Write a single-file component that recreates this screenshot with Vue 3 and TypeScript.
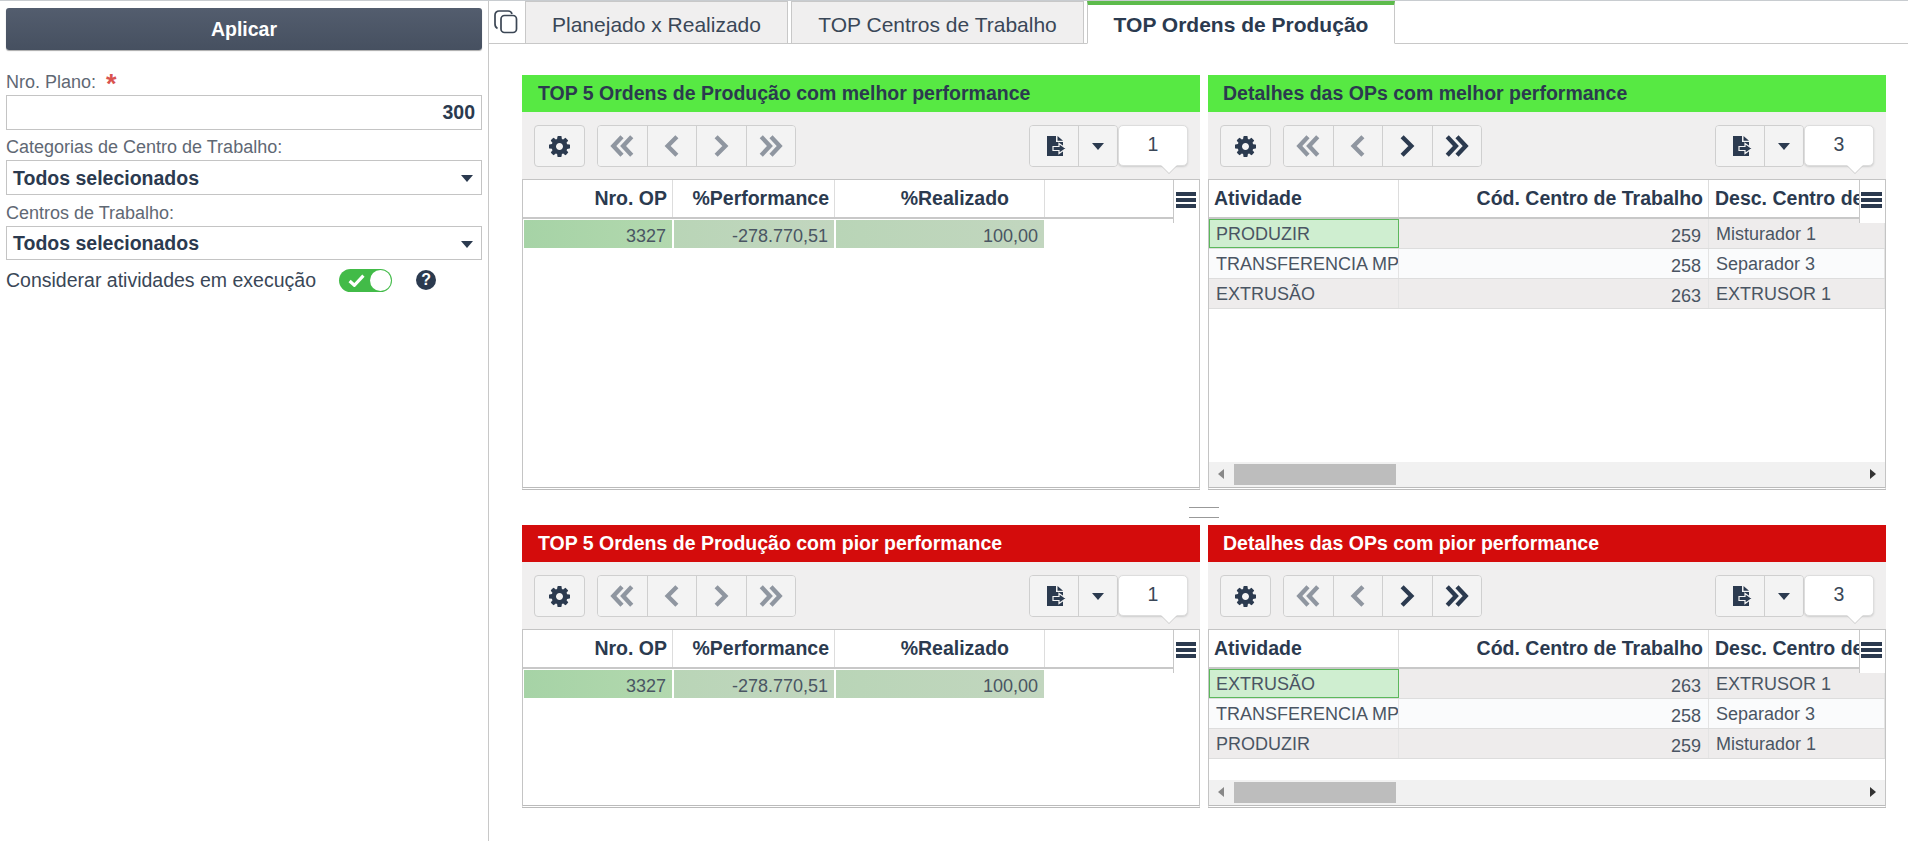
<script setup lang="ts">
interface Col { label: string; align: 'left' | 'right'; width: number; pr?: number; }
interface Panel {
  title: string; tone: 'good' | 'bad'; height: number; count: string; nextActive: boolean;
  wide: boolean; cols: Col[]; rows: string[][];
}
const opCols: Col[] = [
  { label: 'Nro. OP', align: 'right', width: 150 },
  { label: '%Performance', align: 'right', width: 162 },
  { label: '%Realizado', align: 'right', width: 210, pr: 35 },
];
const detailCols: Col[] = [
  { label: 'Atividade', align: 'left', width: 190 },
  { label: 'Cód. Centro de Trabalho', align: 'right', width: 310 },
  { label: 'Desc. Centro de Trabalho', align: 'left', width: 176 },
];
const opRow = [['3327', '-278.770,51', '100,00']];
const panels: Panel[] = [
  { title: 'TOP 5 Ordens de Produção com melhor performance', tone: 'good', height: 415, count: '1', nextActive: false, wide: false, cols: opCols, rows: opRow },
  { title: 'Detalhes das OPs com melhor performance', tone: 'good', height: 415, count: '3', nextActive: true, wide: true, cols: detailCols,
    rows: [['PRODUZIR', '259', 'Misturador 1'], ['TRANSFERENCIA MP', '258', 'Separador 3'], ['EXTRUSÃO', '263', 'EXTRUSOR 1']] },
  { title: 'TOP 5 Ordens de Produção com pior performance', tone: 'bad', height: 283, count: '1', nextActive: false, wide: false, cols: opCols, rows: opRow },
  { title: 'Detalhes das OPs com pior performance', tone: 'bad', height: 283, count: '3', nextActive: true, wide: true, cols: detailCols,
    rows: [['EXTRUSÃO', '263', 'EXTRUSOR 1'], ['TRANSFERENCIA MP', '258', 'Separador 3'], ['PRODUZIR', '259', 'Misturador 1']] },
];
const tabs = ['Planejado x Realizado', 'TOP Centros de Trabalho', 'TOP Ordens de Produção'];
const gear = 'M1024 768q0-106-75-181t-181-75-181 75-75 181 75 181 181 75 181-75 75-181zm512-109v222q0 12-8 23t-20 13l-185 28q-19 54-39 91 35 50 107 138 10 12 10 25t-9 23q-27 37-99 108t-94 71q-12 0-26-9l-138-108q-44 23-91 38-16 136-29 186-7 28-36 28h-222q-14 0-24.500-8.500t-11.500-21.500l-28-184q-49-16-90-37l-141 107q-10 9-25 9-14 0-25-11-126-114-165-168-7-10-7-23 0-12 8-23 15-21 51-66.500t54-70.500q-27-50-41-99l-183-27q-13-2-21-12.500t-8-23.500v-222q0-12 8-23t19-13l186-28q14-46 39-92-40-57-107-138-10-12-10-24 0-10 9-23 26-36 98.500-107.500t94.500-71.500q13 0 26 10l138 107q44-23 91-38 16-136 29-186 7-28 36-28h222q14 0 24.500 8.500t11.500 21.500l28 184q49 16 90 37l142-107q9-9 24-9 13 0 25 10 129 119 165 170 7 8 7 22 0 12-8 23-15 21-51 66.500t-54 70.500q26 50 41 98l183 28q13 2 21 12.500t8 23.500z';
</script>

<template>
  <div class="page">
    <aside class="side">
      <button class="apply">Aplicar</button>
      <label class="lbl first">Nro. Plano: <span class="req">*</span></label>
      <div class="field num">300</div>
      <label class="lbl">Categorias de Centro de Trabalho:</label>
      <div class="field sel">Todos selecionados<i class="caret"></i></div>
      <label class="lbl second">Centros de Trabalho:</label>
      <div class="field sel short">Todos selecionados<i class="caret"></i></div>
      <div class="toggle-row">
        <span>Considerar atividades em execução</span>
        <span class="switch">
          <svg viewBox="0 0 16 12" width="17" height="13"><path d="M1.500 6.500 6 10.500 14.500 1.500" fill="none" stroke="#fff" stroke-width="3"/></svg>
          <i class="knob"></i>
        </span>
        <span class="help">?</span>
      </div>
    </aside>

    <main class="main">
      <div class="tabbar">
        <span class="copy">
          <svg viewBox="0 0 24 24" width="24" height="24" fill="none" stroke="#3b4654" stroke-width="1.700">
            <path d="M3.500 18.500C1.500 17.500 1 16 1 14V5a4 4 0 0 1 4-4h9a4 4 0 0 1 4 3"/>
            <rect x="7" y="5.500" width="15.500" height="17" rx="3.500"/>
          </svg>
        </span>
        <div v-for="(t, i) in tabs" :key="t" class="tab" :class="[{ active: i === 2 }, 't' + i]">{{ t }}</div>
      </div>

      <div class="content">
        <div class="grid">
          <template v-for="(p, pi) in panels" :key="p.title">
            <div v-if="pi === 2" class="splitter"><i></i></div>
            <section class="panel" :style="{ height: p.height + 'px' }">
              <header class="phead" :class="[p.tone, { narrowpad: p.wide }]">{{ p.title }}</header>
              <div class="tools">
                <button class="tbtn single"><svg viewBox="0 0 1536 1536" width="21" height="21"><path :d="gear" fill="#2b3a4f"/></svg></button>
                <div class="navgroup">
                  <button class="tbtn"><svg viewBox="0 0 24 20" width="26" height="22" class="off"><path d="M12 1.500 4 10l8 8.500M21 1.500 13 10l8 8.500" fill="none" stroke-width="4"/></svg></button>
                  <button class="tbtn"><svg viewBox="0 0 24 20" width="26" height="22" class="off"><path d="M16.500 1.500 8 10l8.500 8.500" fill="none" stroke-width="4"/></svg></button>
                  <button class="tbtn"><svg viewBox="0 0 24 20" width="26" height="22" :class="p.nextActive ? 'on' : 'off'"><path d="M7.500 1.500 16 10l-8.500 8.500" fill="none" stroke-width="4"/></svg></button>
                  <button class="tbtn"><svg viewBox="0 0 24 20" width="26" height="22" :class="p.nextActive ? 'on' : 'off'"><path d="m3 1.500 8 8.500-8 8.500M12 1.500l8 8.500-8 8.500" fill="none" stroke-width="4"/></svg></button>
                </div>
                <div class="spacer"></div>
                <div class="exportgroup">
                  <button class="tbtn"><svg class="fileico" viewBox="0 0 20 20" width="20" height="20"><path d="M0 0h9v6h7v14H0z" fill="#2b3a4f"/><path d="M10.500 0 16 4.800h-5.500z" fill="#2b3a4f"/><path d="M6 10.500h6v-3l7 5-7 5v-3H6z" fill="#2b3a4f" stroke="#f3f3f3" stroke-width="1.200"/></svg></button>
                  <button class="tbtn"><i class="caret small"></i></button>
                </div>
                <div class="count">{{ p.count }}</div>
              </div>
              <div class="tablewrap" :class="{ hasbar: p.wide }">
                <div class="thead">
                  <div v-for="c in p.cols" :key="c.label" class="th" :class="c.align" :style="{ width: c.width + 'px', paddingRight: c.pr ? c.pr + 'px' : undefined }">{{ c.label }}</div>
                </div>
                <div class="menu"><i></i><i></i><i></i></div>
                <div class="tbody">
                  <div v-for="(r, ri) in p.rows" :key="ri" class="tr" :class="{ plain: p.wide, even: ri % 2 === 1 }">
                    <div v-for="(v, ci) in r" :key="ci" class="td" :class="[p.cols[ci].align, { focus: p.wide && ri === 0 && ci === 0, g: !p.wide }]" :style="{ width: p.cols[ci].width + 'px' }">{{ v }}</div>
                  </div>
                </div>
                <div v-if="p.wide" class="hscroll">
                  <i class="arr l"></i><i class="thumb"></i><i class="arr r"></i>
                </div>
              </div>
            </section>
          </template>
        </div>
      </div>
    </main>
  </div>
</template>

<style>
html, body { margin: 0; background: #fff; overflow: hidden; }
</style>
<style scoped>
* { box-sizing: border-box; }
.page { display: flex; width: 1908px; height: 841px; overflow: hidden; border-top: 1px solid #c8ccd0; font-family: "Liberation Sans", Arial, sans-serif; color: #2b3a4f; }
.side { width: 489px; flex: none; border-right: 1px solid #c8c8c8; padding: 7px 6px 0 6px; display: flex; flex-direction: column; }
.apply { height: 42px; flex: none; border: 0; border-radius: 3px; background: linear-gradient(#535d6e, #465060); color: #fff; font: bold 19.500px "Liberation Sans", Arial, sans-serif; padding: 0; box-shadow: 0 1px 1px #aaa; }
.lbl { font-size: 18px; color: #5f6874; height: 20px; line-height: 22px; margin-top: 6px; margin-bottom: 4px; white-space: nowrap; }
.lbl.first { margin-top: 21px; }
.lbl.second { margin-top: 7px; }
.req { color: #d9534f; font-weight: bold; font-size: 27px; margin-left: 5px; line-height: 16px; vertical-align: -5px; }
.field { height: 35px; flex: none; border: 1px solid #c4c4c4; font-weight: bold; font-size: 19.500px; line-height: 33px; padding: 0 6px; position: relative; white-space: nowrap; }
.field.sel { line-height: 35px; }
.field.short { height: 34px; line-height: 32px; }
.num { text-align: right; }
.caret { position: absolute; right: 8px; top: 14px; border-left: 6px solid transparent; border-right: 6px solid transparent; border-top: 7px solid #2b3a4f; }
.caret.small { position: static; display: block; }
.toggle-row { display: flex; align-items: center; height: 24px; margin-top: 8px; font-size: 19.500px; white-space: nowrap; color: #3a4757; }
.switch { margin-left: 23px; width: 53px; height: 23px; border-radius: 12px; background: #42bb48; position: relative; flex: none; display: flex; align-items: center; padding-left: 9px; }
.knob { position: absolute; right: 1px; top: 1px; width: 21px; height: 21px; border-radius: 50%; background: #fff; }
.help { margin-left: 24px; width: 20px; height: 20px; border-radius: 50%; background: #2b3a4f; color: #fff; font-weight: bold; font-size: 16px; line-height: 20px; text-align: center; flex: none; }

.main { flex: 1; min-width: 0; display: flex; flex-direction: column; }
.tabbar { height: 43px; flex: none; display: flex; align-items: flex-end; border-bottom: 1px solid #c8c8c8; position: relative; padding-left: 36px; }
.copy { position: absolute; left: 5px; top: 9px; line-height: 0; }
.tab { height: 43px; margin-bottom: -1px; border: 1px solid #c8c8c8; background: #f0efef; font-size: 21px; line-height: 46px; text-align: center; white-space: nowrap; color: #3a4757; margin-right: 3px; }
.t0 { width: 263px; }
.t1 { width: 293px; }
.t2 { width: 308px; margin-right: 0; }
.tab.active { background: #fff; border-bottom-color: #fff; border-top: 4px solid #5dbb4c; font-weight: bold; line-height: 40px; color: #2b3a4f; }
.content { flex: 1; padding: 31px 22px 0 33px; }
.grid { display: grid; grid-template-columns: 678px 678px; column-gap: 8px; }
.splitter { grid-column: 1 / -1; height: 35px; display: flex; justify-content: center; align-items: flex-start; padding-top: 17px; }
.splitter i { display: block; width: 30px; height: 11px; border-top: 1px solid #999; border-bottom: 1px solid #999; }
.panel { display: flex; flex-direction: column; }
.phead { height: 37px; flex: none; padding-left: 16px; font-weight: bold; font-size: 19.500px; line-height: 37px; white-space: nowrap; }
.phead.narrowpad { padding-left: 15px; }
.phead.good { background: #57e943; color: #2b3a4f; }
.phead.bad { background: #d40c0c; color: #fff; }
.tools { height: 67px; flex: none; background: #f0efef; display: flex; align-items: flex-start; padding: 13px 12px 0 12px; }
.tbtn { background: #f3f3f3; border: 0; padding: 0; display: flex; align-items: center; justify-content: center; height: 100%; }
.single { width: 51px; height: 42px; border: 1px solid #cfcfcf; border-radius: 4px; }
.navgroup { display: flex; width: 199px; height: 42px; margin-left: 12px; border: 1px solid #cfcfcf; border-radius: 4px; overflow: hidden; }
.navgroup .tbtn { flex: 1; border-right: 1px solid #cfcfcf; }
.navgroup .tbtn:last-child { border-right: 0; }
.off { stroke: #8f96a0; }
.on { stroke: #2b3a4f; }
.spacer { flex: 1; }
.exportgroup { display: flex; width: 89px; height: 42px; border: 1px solid #cfcfcf; border-radius: 4px; overflow: hidden; }
.exportgroup .tbtn:first-child { width: 49px; border-right: 1px solid #cfcfcf; }
.exportgroup .tbtn:last-child { flex: 1; }
.fileico { margin-left: 5px; }
.count { width: 70px; height: 41px; background: #fff; border: 1px solid #ddd; border-radius: 5px; text-align: center; font-size: 19.500px; line-height: 36px; color: #3a4757; position: relative; box-shadow: 0 1px 2px #ccc; }
.count::after { content: ""; position: absolute; right: 10px; bottom: -8px; width: 0; height: 0; border-left: 8px solid transparent; border-right: 8px solid transparent; border-top: 8px solid #fff; filter: drop-shadow(0 1px 0 #ccc); }
.tablewrap { flex: 1; position: relative; border: 1px solid #c4c4c4; border-bottom: 3px double #bbb; overflow: hidden; background: #fff; display: flex; flex-direction: column; min-height: 0; }
.thead { height: 39px; flex: none; display: flex; width: 650px; border-bottom: 2px solid #c8c8c8; overflow: hidden; }
.th { flex: none; border-right: 1px solid #ddd; font-weight: bold; font-size: 19.500px; line-height: 36px; padding: 0 5px; white-space: nowrap; overflow: hidden; }
.th.right { text-align: right; }
.th:last-child.left { padding-left: 6px; }
.menu { position: absolute; right: 0; top: 0; width: 26px; height: 43px; background: #fff; border-left: 1px solid #c8c8c8; display: flex; flex-direction: column; gap: 2px; padding: 12px 3px 0 2px; }
.hasbar .menu { padding: 12px 3px 0 1px; }
.menu i { display: block; height: 4px; background: #2b3a4f; }
.tbody { flex: 1; min-height: 0; }
.tr { display: flex; }
.td { flex: none; font-size: 18px; color: #4a5563; height: 28px; line-height: 32px; padding: 0 7px; white-space: nowrap; overflow: hidden; }
.td.right { text-align: right; }
.td.g { margin-top: 1px; padding-right: 6px; border-left: 1px solid #fff; border-right: 1px solid #fff; background: linear-gradient(90deg, #b9d5b7, #c2d6bf); }
.td.g:first-child { background: linear-gradient(90deg, #a6d3a6, #b2d8ae); }
.tr.plain { background: #eeecec; height: 30px; border-bottom: 1px solid #ddd; }
.tr.plain.even { background: #fafbfc; }
.tr.plain .td { height: 29px; line-height: 30px; border-right: 1px solid #e4e4e4; }
.tr.plain .td.right { line-height: 34px; }
.td.focus { background: #cfeed0; border: 1px solid #5cb85c !important; padding-left: 6px; line-height: 28px !important; }
.hscroll { flex: none; height: 25px; background: #f1f1f1; position: relative; }
.thumb { position: absolute; left: 25px; top: 2px; width: 162px; height: 21px; background: #bdbdbd; }
.arr { position: absolute; top: 7px; border-top: 5px solid transparent; border-bottom: 5px solid transparent; }
.arr.l { left: 9px; border-right: 6px solid #888; }
.arr.r { right: 9px; border-left: 6px solid #333; }
</style>
